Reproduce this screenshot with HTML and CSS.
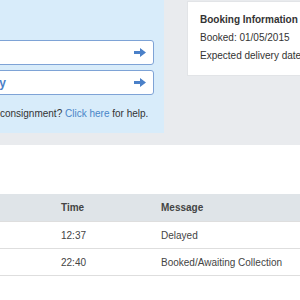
FILE: index.html
```html
<!DOCTYPE html>
<html lang="en">
<head>
  <meta charset="UTF-8" />
  <title>Consignment Tracking</title>
  <link rel="stylesheet" href="styles.css">
</head>
<body>

  <div class="page">
    <div class="top">
      <div class="search-panel">
        <div class="field">
          <span class="field-text"></span>
          <svg class="arrow" width="12" height="9" viewBox="0 0 12 9"><path d="M0 3h6V0l6 4.5L6 9V6H0z" fill="#4a80c8"/></svg>
        </div>
        <div class="field">
          <span class="field-text">By delivery</span>
          <svg class="arrow" width="12" height="9" viewBox="0 0 12 9"><path d="M0 3h6V0l6 4.5L6 9V6H0z" fill="#4a80c8"/></svg>
        </div>
        <p class="help">Can't find your consignment? <a href="#">Click here</a> for help.</p>
      </div>

      <div class="booking-card">
        <div class="card-title">Booking Information</div>
        <div>Booked: 01/05/2015</div>
        <div>Expected delivery date: 02/05/2015</div>
      </div>
    </div>

    <table class="history">
      <thead>
        <tr>
          <th class="col-date">Date</th>
          <th class="col-time">Time</th>
          <th>Message</th>
        </tr>
      </thead>
      <tbody>
        <tr>
          <td>02/05/2015</td>
          <td>12:37</td>
          <td>Delayed</td>
        </tr>
        <tr>
          <td>01/05/2015</td>
          <td>22:40</td>
          <td>Booked/Awaiting Collection</td>
        </tr>
      </tbody>
    </table>
  </div>

</body>
</html>
```

FILE: styles.css
```css
html, body {
  margin: 0;
  padding: 0;
  background: #fff;
  font-family: 'Liberation Sans', Arial, sans-serif;
  font-size: 10px;
  color: #333;
  overflow: hidden;
}

.page {
  margin-left: -77px;
  width: 420px;
}

.top {
  display: flex;
  align-items: flex-start;
  background: #e9ebee;
  padding-bottom: 12px;
}

.search-panel {
  flex: 0 0 241px;
  box-sizing: border-box;
  padding: 40px 10px 10px;
  background: #d8ecfa;
}

.field {
  display: flex;
  align-items: center;
  height: 25px;
  box-sizing: border-box;
  margin-bottom: 5px;
  padding: 0 7px 0 8px;
  background: #fff;
  border: 1px solid #7ea3d6;
  border-radius: 3px;
}

.field-text {
  flex: 1;
  font-size: 12px;
  font-weight: bold;
  color: #4a80c8;
  white-space: nowrap;
}

.help {
  margin: 10px 0 0;
  line-height: 18px;
  white-space: nowrap;
}

.help a {
  color: #4a86c8;
  text-decoration: none;
}

.booking-card {
  flex: 1;
  min-width: 0;
  overflow: hidden;
  margin: 1px 0 0 23px;
  padding: 9px 12px 10px;
  background: #fff;
  border: 1px solid #e2e4e7;
  line-height: 18px;
  white-space: nowrap;
}

.card-title {
  font-weight: bold;
}

.history {
  width: 100%;
  margin-top: 49px;
  border-collapse: collapse;
  color: #444;
}

.history th,
.history td {
  text-align: left;
  padding: 0 8px;
  height: 26px;
  border-bottom: 1px solid #dedede;
}

.history th {
  background: #dfe4e8;
  font-weight: bold;
  height: 27px;
}

.col-date {
  width: 114px;
}

.col-time {
  width: 84px;
}
```
